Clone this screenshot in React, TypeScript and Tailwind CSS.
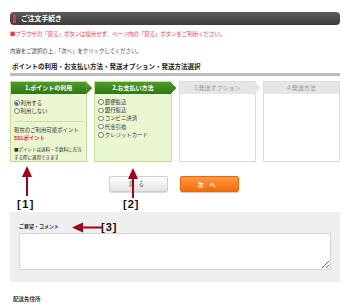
const Radio = ({ checked = false }: { checked?: boolean }) => (
  <span className="mr-[1px] inline-flex h-[5.5px] w-[5.5px] shrink-0 items-center justify-center rounded-full border-[0.8px] border-[#777] bg-white">
    {checked && <span className="h-[3px] w-[3px] rounded-full bg-[#2f64c8]" />}
  </span>
);

function StepHeader({ label, active, arrow }: { label: string; active: boolean; arrow: boolean }) {
  return (
    <div
      className={`relative flex h-[12px] items-center justify-center text-[6px] leading-none ${
        active ? "bg-gradient-to-b from-[#4f9b2a] to-[#2f7812] font-bold text-white" : "bg-[#e6e6e6] text-[#9a9a9a]"
      }`}
    >
      {label}
      {arrow && (
        <span
          className={`absolute right-[-6px] top-0 h-[12px] w-[6px] [clip-path:polygon(0_0,100%_50%,0_100%)] ${
            active ? "bg-gradient-to-b from-[#4f9b2a] to-[#2f7812]" : "bg-[#e6e6e6]"
          }`}
        />
      )}
    </div>
  );
}

function UpArrow({ x, top }: { x: number; top: number }) {
  return (
    <svg className="absolute" style={{ left: x - 6, top }} width="12" height="30" viewBox="0 0 12 30">
      <polygon points="6,0 11,11 1,11" fill="#a3001c" />
      <rect x="5" y="10" width="2" height="20" fill="#a3001c" />
    </svg>
  );
}

export default function App() {
  const payments = ["郵便振込", "銀行振込", "コンビニ決済", "代金引換", "クレジットカード"];
  return (
    <div className="relative h-[307px] w-[350px] overflow-hidden bg-white px-[10px] pt-[12px] font-['Noto_Sans_CJK_JP','Noto_Sans',sans-serif] text-[#333]">
      {/* title bar */}
      <div className="flex h-[13px] items-center gap-[5px] rounded-[4px] bg-gradient-to-b from-[#5c5c5c] to-[#3c3c3c] pl-[3px]">
        <div className="flex h-[9px]">
          <span className="w-[1px] bg-[#3b6fd8]" />
          <span className="w-[2px] bg-[#e0353a]" />
        </div>
        <span className="text-[6.8px] font-bold leading-none text-white">ご注文手続き</span>
      </div>

      <p className="mt-[6px] text-[5.4px] leading-[6px] text-[#ff2d4e]">
        ■ブラウザの「戻る」ボタンは使用せず、ページ内の「戻る」ボタンをご利用ください。
      </p>
      <p className="mt-[11px] text-[5.4px] leading-[6px] text-[#444]">内容をご選択の上、「次へ」をクリックしてください。</p>
      <p className="mt-[9px] pl-[2px] text-[6.5px] font-bold leading-[7px] text-[#222]">
        ポイントの利用・お支払い方法・発送オプション・発送方法選択
      </p>
      <div className="mt-[3px] h-[3px] bg-[#bdbdbd]" />

      {/* steps */}
      <div className="mt-[5px] grid h-[81px] grid-cols-4 gap-[7px]">
        <div className="flex flex-col border border-[#bfe08f] bg-[#e9f6d0]">
          <StepHeader label="1.ポイントの利用" active arrow />
          <div className="px-[3px] pt-[5px] text-[5.4px] leading-[8px]">
            <div className="flex items-center"><Radio checked />利用する</div>
            <div className="flex items-center"><Radio />利用しない</div>
            <div className="mt-[6px] h-[1px] bg-[#c9e2a2]" />
            <div className="mt-[4px]">現在のご利用可能ポイント</div>
            <div className="font-bold text-[#ff2020]">551ポイント</div>
            <div className="mt-[3px] text-[4.5px] leading-[8px]">
              ■ポイントは送料・手数料に充当
              <br />
              する際に適用できます
            </div>
          </div>
        </div>
        <div className="flex flex-col border border-[#bfe08f] bg-[#e9f6d0]">
          <StepHeader label="2.お支払い方法" active arrow />
          <div className="px-[3px] pt-[4px] text-[5.4px] leading-[8.2px]">
            {payments.map((p) => (
              <div key={p} className="flex items-center">
                <Radio />
                {p}
              </div>
            ))}
          </div>
        </div>
        <div className="flex flex-col border border-[#dcdcdc] bg-white">
          <StepHeader label="3.発送オプション" active={false} arrow />
        </div>
        <div className="flex flex-col border border-[#dcdcdc] bg-white">
          <StepHeader label="4.発送方法" active={false} arrow={false} />
        </div>
      </div>

      {/* buttons */}
      <div className="mt-[14px] flex justify-center gap-[12px] pr-[2px]">
        <button className="h-[16px] w-[59px] rounded-[2px] border border-[#cfcfcf] bg-gradient-to-b from-white to-[#e2e2e2] text-[5.5px] tracking-[4px] text-[#555] shadow-[0_1px_1px_rgba(0,0,0,0.15)]">
          戻る
        </button>
        <button className="h-[16px] w-[59px] rounded-[2px] border border-[#e86a10] bg-gradient-to-b from-[#ff9a3c] to-[#f56a00] text-[6px] font-bold tracking-[6px] text-white shadow-[0_1px_1px_rgba(0,0,0,0.2)]">
          次へ
        </button>
      </div>

      {/* comment */}
      <div className="mt-[20px] h-[70px] bg-[#efefef] px-[9px] pt-[11px]">
        <div className="text-[5px] font-bold leading-[6px] text-[#333]">ご要望・コメント</div>
        <textarea className="mt-[4px] block h-[37px] w-full resize-y border border-[#d4d4d4] bg-white" />
      </div>

      <p className="mt-[14px] pl-[3px] text-[5.5px] font-bold leading-[6px] text-[#333]">配送先住所</p>

      {/* annotations */}
      <UpArrow x={27} top={166} />
      <UpArrow x={133} top={168} />
      <svg className="absolute left-[72px] top-[222px]" width="30" height="11" viewBox="0 0 30 11">
        <polygon points="0,5.5 11,0.5 11,10.5" fill="#a3001c" />
        <rect x="10" y="4.5" width="20" height="2" fill="#a3001c" />
      </svg>
      <span className="absolute left-[17px] top-[196px] font-['Liberation_Sans',sans-serif] text-[11px] font-bold tracking-[1.5px] text-[#111]">[1]</span>
      <span className="absolute left-[123px] top-[196px] font-['Liberation_Sans',sans-serif] text-[11px] font-bold tracking-[1px] text-[#111]">[2]</span>
      <span className="absolute left-[101px] top-[219px] font-['Liberation_Sans',sans-serif] text-[11px] font-bold tracking-[1px] text-[#111]">[3]</span>
    </div>
  );
}
